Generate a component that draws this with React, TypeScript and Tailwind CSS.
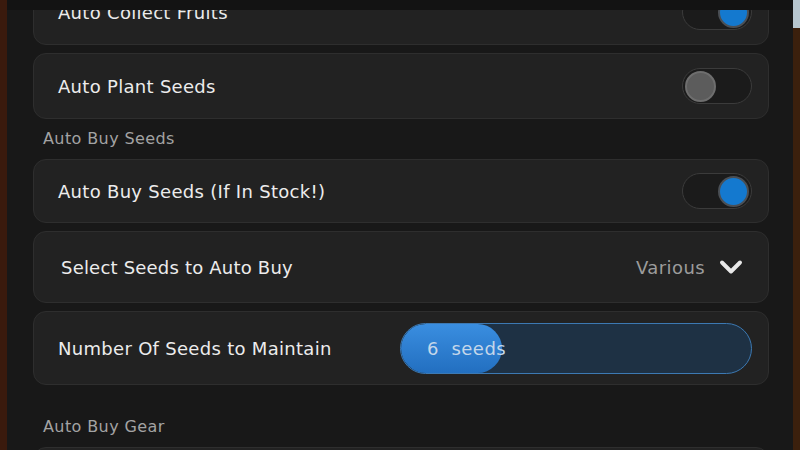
import React from 'react';
import { ChevronDown } from 'lucide-react';

function Toggle({ on }: { on: boolean }) {
  return (
    <div className="w-[70px] h-[36px] rounded-full bg-[#1b1b1b] border border-[#3b3b3b] flex items-center px-[2px] shrink-0">
      {on ? (
        <div className="ml-auto w-[31px] h-[31px] rounded-full bg-[#1479cf] border-2 border-[#4a4f55]" />
      ) : (
        <div className="w-[31px] h-[31px] rounded-full bg-[#5c5c5c] border-2 border-[#6e6e6e]" />
      )}
    </div>
  );
}

function Card({ h, children }: { h: string; children: React.ReactNode }) {
  return (
    <div className={`${h} rounded-[13px] bg-[#222222] border border-[#2e2e2e] flex items-center justify-between pl-6 pr-4 shrink-0`}>
      {children}
    </div>
  );
}

const ToggleRow = ({ label, on, h }: { label: string; on: boolean; h: string }) => (
  <Card h={h}>
    <span className="text-[18px] text-[#ececec] tracking-[0.3px]">{label}</span>
    <Toggle on={on} />
  </Card>
);

export default function App() {
  return (
    <div
      className="w-[800px] h-[450px] flex overflow-hidden bg-[#181818]"
      style={{ fontFamily: '"DejaVu Sans", "Noto Sans", sans-serif' }}
    >
      <div className="w-[7px] bg-[#3a1a0d] shrink-0" />
      <div className="flex-1 flex flex-col">
        <div className="h-[10px] bg-[#131313] shrink-0" />
        <div className="flex-1 overflow-hidden pl-[26px] pr-[24px]">
          <div className="flex flex-col gap-2 -mt-[31px]">
            <ToggleRow label="Auto Collect Fruits" on h="h-[66px]" />
            <ToggleRow label="Auto Plant Seeds" on={false} h="h-[66px]" />
            <div className="h-[24px] flex items-center pl-[10px] text-[16px] text-[#a3a3a3] tracking-[0.4px]">Auto Buy Seeds</div>
            <ToggleRow label="Auto Buy Seeds (If In Stock!)" on h="h-[64px]" />
            <Card h="h-[72px]">
              <span className="text-[18px] text-[#ececec] pl-[3px] tracking-[0.2px]">Select Seeds to Auto Buy</span>
              <div className="flex items-center gap-2 mr-[3px]">
                <span className="text-[18px] text-[#9c9c9c] tracking-[0.4px]">Various</span>
                <ChevronDown size={36} strokeWidth={2.6} className="text-[#e8e8e8]" />
              </div>
            </Card>
            <Card h="h-[74px]">
              <span className="text-[18px] text-[#ececec] tracking-[0.3px]">Number Of Seeds to Maintain</span>
              <div className="relative w-[352px] h-[51px] rounded-full bg-[#1e3144] border border-[#3c79b3] overflow-hidden">
                <div className="absolute left-0 top-0 bottom-0 w-[101px] rounded-full bg-gradient-to-b from-[#3a8ee0] to-[#226fc0]" />
                <span className="relative h-full flex items-center pl-[26px] text-[18px] text-[#c4d7ea] tracking-[0.5px]">
                  6&nbsp;&nbsp;seeds
                </span>
              </div>
            </Card>
            <div className="h-[46px] flex items-end pl-[10px] text-[16px] text-[#a3a3a3] tracking-[0.4px]">Auto Buy Gear</div>
            <Card h="h-[66px]">
              <span />
            </Card>
          </div>
        </div>
      </div>
      <div className="w-[7px] flex flex-col shrink-0">
        <div className="h-[28px] bg-[#b7c6cf]" />
        <div className="flex-1 bg-[#3b200d]" />
      </div>
    </div>
  );
}
